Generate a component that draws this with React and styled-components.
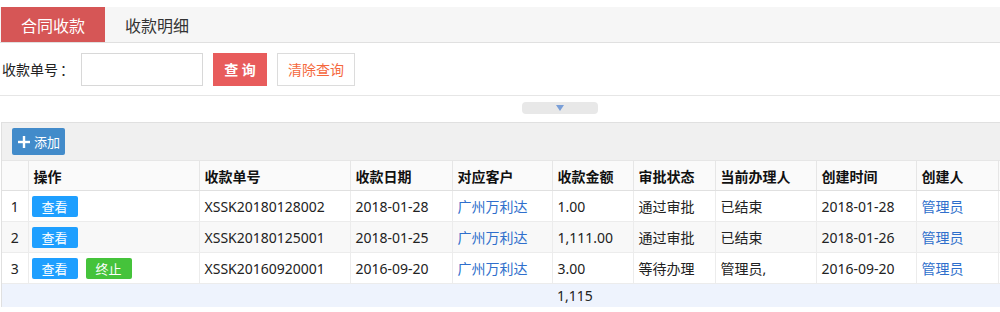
import React from 'react';
import styled, { createGlobalStyle } from 'styled-components';

const rows = [
  { no: '20180128002', date: '2018-01-28', amount: '1.00', state: '通过审批', handler: '已结束', created: '2018-01-28', stop: false },
  { no: '20180125001', date: '2018-01-25', amount: '1,111.00', state: '通过审批', handler: '已结束', created: '2018-01-26', stop: false },
  { no: '20160920001', date: '2016-09-20', amount: '3.00', state: '等待办理', handler: '管理员,', created: '2016-09-20', stop: true },
];

const columns = ['', '操作', '收款单号', '收款日期', '对应客户', '收款金额', '审批状态', '当前办理人', '创建时间', '创建人', ''];
const widths = [26, 171, 151, 102, 100, 81, 82, 101, 100, 82, 30];

function PlusIcon() {
  return (
    <svg width="12" height="12" viewBox="0 0 12 12">
      <rect x="4.8" y="0" width="2.4" height="12" fill="#fff" />
      <rect x="0" y="4.8" width="12" height="2.4" fill="#fff" />
    </svg>
  );
}

function App() {
  return (
    <Page>
      <GlobalStyle />
      <Tabs>
        <Tab $active>合同收款</Tab>
        <Tab>收款明细</Tab>
      </Tabs>
      <SearchBar>
        <Label>收款单号<Colon>：</Colon></Label>
        <Input />
        <QueryBtn>查 询</QueryBtn>
        <ClearBtn>清除查询</ClearBtn>
      </SearchBar>
      <CollapseRow>
        <Handle>
          <Arrow />
        </Handle>
      </CollapseRow>
      <Grid>
        <Toolbar>
          <AddBtn>
            <PlusIcon />
            添加
          </AddBtn>
        </Toolbar>
        <Table>
          <colgroup>
            {widths.map((w, i) => <col key={i} style={{ width: w }} />)}
          </colgroup>
          <thead>
            <tr>
              {columns.map((c, i) => <Th key={i}>{c}</Th>)}
            </tr>
          </thead>
          <tbody>
            {rows.map((r, i) => (
              <Tr key={r.no} $alt={i % 2 === 1}>
                <NumCell>{i + 1}</NumCell>
                <ActionCell>
                  <SmallBtn $color="#1e9fff">查看</SmallBtn>
                  {r.stop && <SmallBtn $color="#45c33b">终止</SmallBtn>}
                </ActionCell>
                <Td>{`XSSK${r.no}`}</Td>
                <Td>{r.date}</Td>
                <Td><Link>广州万利达</Link></Td>
                <Td>{r.amount}</Td>
                <Td>{r.state}</Td>
                <Td>{r.handler}</Td>
                <Td>{r.created}</Td>
                <Td><Link>管理员</Link></Td>
                <Td />
              </Tr>
            ))}
            <FootRow>
              <FootCell colSpan={5} />
              <FootCell>1,115</FootCell>
              <FootCell colSpan={5} />
            </FootRow>
          </tbody>
        </Table>
      </Grid>
    </Page>
  );
}

export default App;

const GlobalStyle = createGlobalStyle`
  body {
    margin: 0;
    background: #fff;
    font-family: "Noto Sans", "Noto Sans CJK SC", sans-serif;
    color: #222;
  }
`;

const Page = styled.div`
  width: 1000px;
  overflow: hidden;
  padding-top: 7px;
`;

const Tabs = styled.div`
  display: flex;
  height: 35px;
  background: #f6f6f6;
  border-bottom: 1px solid #e0e0e0;
`;

const Tab = styled.div`
  width: 104px;
  margin-left: ${(p) => (p.$active ? '1px' : '0')};
  display: flex;
  align-items: center;
  justify-content: center;
  font-size: 16px;
  color: ${(p) => (p.$active ? '#fff' : '#333')};
  background: ${(p) => (p.$active ? '#d65656' : 'transparent')};
`;

const SearchBar = styled.div`
  display: flex;
  align-items: center;
  height: 52px;
  padding-left: 2px;
  border-bottom: 1px solid #e6e6e6;
`;

const Label = styled.span`
  font-size: 14px;
  color: #222;
  width: 79px;
`;

const Colon = styled.span`
  font-family: "Noto Sans CJK SC", sans-serif;
  margin-left: 2px;
`;

const Input = styled.input`
  box-sizing: border-box;
  width: 122px;
  height: 33px;
  border: 1px solid #d8d8d8;
  outline: none;
`;

const QueryBtn = styled.button`
  box-sizing: border-box;
  margin-left: 10px;
  width: 54px;
  height: 33px;
  border: none;
  background: #e85c5c;
  color: #fff;
  font-family: inherit;
  font-size: 14px;
  font-weight: bold;
  padding: 0;
`;

const ClearBtn = styled.button`
  box-sizing: border-box;
  margin-left: 10px;
  width: 78px;
  height: 33px;
  border: 1px solid #dcdcdc;
  background: #fff;
  color: #f5683d;
  font-family: inherit;
  font-size: 14px;
  padding: 0;
`;

const CollapseRow = styled.div`
  height: 26px;
  display: flex;
  align-items: flex-start;
  padding-top: 6px;
  padding-left: 522px;
  box-sizing: border-box;
`;

const Handle = styled.div`
  width: 76px;
  height: 12px;
  border-radius: 4px;
  background: #e8e8e8;
  display: flex;
  align-items: center;
  justify-content: center;
`;

const Arrow = styled.div`
  width: 0;
  height: 0;
  border-left: 4px solid transparent;
  border-right: 4px solid transparent;
  border-top: 6px solid #7a9fd8;
`;

const Grid = styled.div`
  margin-left: 1px;
  border-top: 1px solid #e0e0e0;
  border-left: 1px solid #e0e0e0;
  width: 1030px;
`;

const Toolbar = styled.div`
  height: 37px;
  background: #f0f0f0;
  display: flex;
  align-items: center;
  padding-left: 10px;
  border-bottom: 1px solid #e6e6e6;
`;

const AddBtn = styled.button`
  display: flex;
  align-items: center;
  gap: 4px;
  height: 27px;
  width: 53px;
  padding: 0 0 0 6px;
  border: none;
  border-radius: 2px;
  background: #428bca;
  color: #fff;
  font-family: inherit;
  font-size: 13px;
`;

const Table = styled.table`
  border-collapse: collapse;
  table-layout: fixed;
  width: 1026px;
  font-size: 14px;
`;

const Th = styled.th`
  height: 29px;
  padding: 0 5px;
  text-align: left;
  font-weight: bold;
  color: #111;
  background: #fafafa;
  border-right: 1px solid #e6e6e6;
  border-bottom: 1px solid #e0e0e0;
`;

const Tr = styled.tr`
  background: ${(p) => (p.$alt ? '#f8f8f8' : '#fff')};
`;

const Td = styled.td`
  height: 30px;
  padding: 0 5px;
  white-space: nowrap;
  color: #222;
  border-right: 1px solid #ececec;
  border-bottom: 1px solid #ececec;
`;

const NumCell = styled(Td)`
  padding: 0;
  text-align: center;
`;

const ActionCell = styled(Td)`
  padding-left: 3px;
`;

const SmallBtn = styled.button`
  height: 21px;
  width: 46px;
  margin-right: 8px;
  border: none;
  border-radius: 2px;
  background: ${(p) => p.$color};
  color: #fff;
  font-family: inherit;
  font-size: 13px;
  padding: 0;
  vertical-align: middle;
`;

const Link = styled.span`
  color: #2f6fcc;
`;

const FootRow = styled.tr`
  background: #eef3fd;
`;

const FootCell = styled.td`
  height: 23px;
  padding: 0 5px;
  color: #222;
`;
